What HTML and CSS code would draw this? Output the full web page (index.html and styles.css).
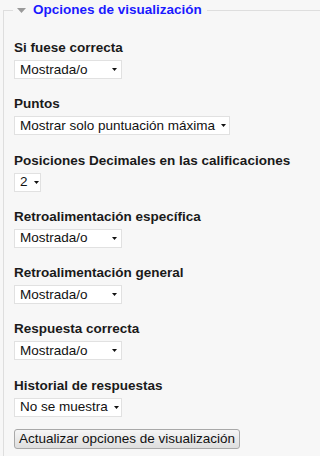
FILE: index.html
```html
<!DOCTYPE html>
<html lang="es">
<head>
<meta charset="utf-8">
<title>Opciones de visualización</title>
<link rel="stylesheet" href="styles.css">
</head>
<body>
<form class="options">
  <fieldset class="box">
    <legend class="legend">
      <svg class="caret" width="9" height="5" viewBox="0 0 9 5"><path d="M0 0H9L4.5 5Z" fill="#9a9a9a"/></svg>
      <span class="legend-text">Opciones de visualización</span>
    </legend>
    <div class="fields">
      <div class="field">
        <div class="label">Si fuese correcta</div>
        <div class="select w-md"><span>Mostrada/o</span><svg class="arrow" width="5" height="3" viewBox="0 0 5 3"><path d="M0 0H5L2.5 3Z" fill="#111"/></svg></div>
      </div>
      <div class="field">
        <div class="label">Puntos</div>
        <div class="select w-lg"><span>Mostrar solo puntuación máxima</span><svg class="arrow" width="5" height="3" viewBox="0 0 5 3"><path d="M0 0H5L2.5 3Z" fill="#111"/></svg></div>
      </div>
      <div class="field">
        <div class="label">Posiciones Decimales en las calificaciones</div>
        <div class="select w-sm"><span>2</span><svg class="arrow" width="5" height="3" viewBox="0 0 5 3"><path d="M0 0H5L2.5 3Z" fill="#111"/></svg></div>
      </div>
      <div class="field">
        <div class="label">Retroalimentación específica</div>
        <div class="select w-md"><span>Mostrada/o</span><svg class="arrow" width="5" height="3" viewBox="0 0 5 3"><path d="M0 0H5L2.5 3Z" fill="#111"/></svg></div>
      </div>
      <div class="field">
        <div class="label">Retroalimentación general</div>
        <div class="select w-md"><span>Mostrada/o</span><svg class="arrow" width="5" height="3" viewBox="0 0 5 3"><path d="M0 0H5L2.5 3Z" fill="#111"/></svg></div>
      </div>
      <div class="field">
        <div class="label">Respuesta correcta</div>
        <div class="select w-md"><span>Mostrada/o</span><svg class="arrow" width="5" height="3" viewBox="0 0 5 3"><path d="M0 0H5L2.5 3Z" fill="#111"/></svg></div>
      </div>
      <div class="field">
        <div class="label">Historial de respuestas</div>
        <div class="select w-md"><span>No se muestra</span><svg class="arrow" width="5" height="3" viewBox="0 0 5 3"><path d="M0 0H5L2.5 3Z" fill="#111"/></svg></div>
      </div>
    </div>
    <div class="actions">
      <button type="button" class="btn">Actualizar opciones de visualización</button>
    </div>
  </fieldset>
</form>
</body>
</html>
```
FILE: styles.css
```css
html, body {
  margin: 0;
  padding: 0;
  background: #f7f7f7;
  font-family: "Liberation Sans", Arial, sans-serif;
  font-size: 13.5px;
  color: #1e1e1e;
  overflow: hidden;
}

.options {
  margin: 0;
}

.box {
  margin: 0 0 0 3px;
  padding: 19px 0 8px 10px;
  border: 1px solid #dedede;
  border-right: none;
  min-width: 0;
}

.legend {
  margin-left: -1px;
  padding: 0 5px 0 4px;
  line-height: 20px;
  height: 20px;
  display: flex;
  align-items: center;
}

.caret {
  display: block;
  margin-right: 7px;
  margin-top: 1px;
}

.legend-text {
  font-weight: bold;
  color: #1a1aff;
}

.fields {
  display: flex;
  flex-direction: column;
  gap: 16.3px;
}

.field {
  display: flex;
  flex-direction: column;
  align-items: flex-start;
}

.label {
  font-weight: bold;
  line-height: 18px;
  margin-bottom: 3px;
  color: #1a1a1a;
  white-space: nowrap;
}

.select {
  box-sizing: border-box;
  height: 19px;
  background: #fff;
  border: 1px solid #e1e1e1;
  display: flex;
  align-items: center;
  justify-content: space-between;
  padding: 0 4px 0 5px;
  line-height: 16px;
  color: #111;
  white-space: nowrap;
}

.select .arrow {
  display: block;
  flex: none;
  margin-left: 6px;
}

.w-md { width: 108px; }
.w-lg { width: 216px; }
.w-sm { width: 27px; }

.actions {
  margin-top: 12.5px;
}

.btn {
  box-sizing: border-box;
  height: 20px;
  margin: 0;
  padding: 0 4px;
  font-family: "Liberation Sans", Arial, sans-serif;
  font-size: 13.5px;
  line-height: 16px;
  color: #111;
  white-space: nowrap;
  border: 1px solid #a9a9a9;
  border-radius: 3px;
  background: linear-gradient(#f6f6f6, #dedede);
}
```
